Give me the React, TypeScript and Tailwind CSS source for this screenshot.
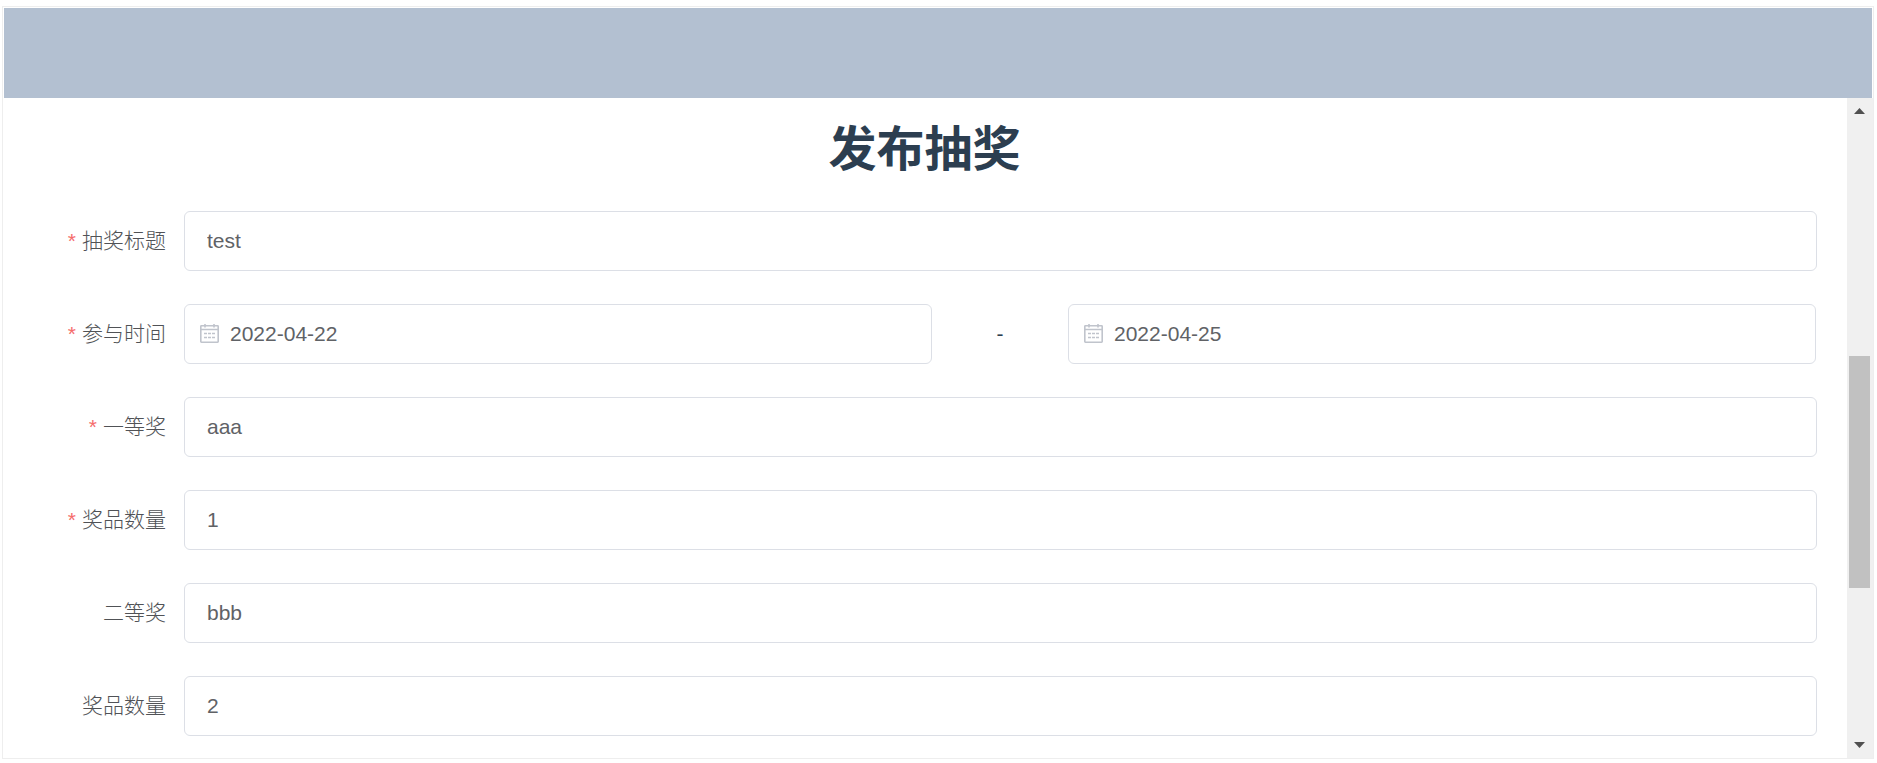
import { useState, type ReactNode } from "react";

const boxClass =
  "h-[60px] w-full rounded-md border border-[#dcdfe6] bg-white text-[21px] text-[#606266] outline-none focus:border-[#409eff]";

function CalendarIcon() {
  return (
    <svg
      className="pointer-events-none absolute left-4 top-5 size-[19px] text-[#c0c4cc]"
      viewBox="0 0 19 19"
      fill="none"
      stroke="currentColor"
      aria-hidden="true"
    >
      <rect x="0.8" y="1.8" width="17.4" height="16.4" rx="0.6" strokeWidth="1.6" />
      <path d="M1 5.5H18" strokeWidth="1.5" />
      <path d="M5 0V3.6M14 0V3.6" strokeWidth="1.6" />
      <path d="M4 9.5H7M8 9.5H11M12 9.5H15M4 13.5H7M8 13.5H11M12 13.5H15" strokeWidth="1.3" />
    </svg>
  );
}

function Row({ id, label, required, children }: { id: string; label: string; required?: boolean; children: ReactNode }) {
  return (
    <div className="flex items-center">
      <label
        htmlFor={id}
        className="w-[180px] shrink-0 pr-[18px] text-right text-[21px] leading-[60px] font-light text-[#505256]"
      >
        {required && <span className="mr-1.5 font-normal text-[#f56c6c]">*</span>}
        {label}
      </label>
      <div className="min-w-0 grow">{children}</div>
    </div>
  );
}

function TextField({ id, label, required, initial }: { id: string; label: string; required?: boolean; initial: string }) {
  const [value, setValue] = useState(initial);
  return (
    <Row id={id} label={label} required={required}>
      <input
        id={id}
        type="text"
        required={required}
        value={value}
        onChange={(e) => setValue(e.target.value)}
        className={`${boxClass} block px-[22px]`}
      />
    </Row>
  );
}

function DateField({ id, name, initial }: { id: string; name: string; initial: string }) {
  const [value, setValue] = useState(initial);
  return (
    <div className="relative">
      <input
        id={id}
        type="text"
        aria-label={name}
        value={value}
        onChange={(e) => setValue(e.target.value)}
        className={`${boxClass} block pr-4 pl-[45px]`}
      />
      <CalendarIcon />
    </div>
  );
}

function Scrollbar() {
  return (
    <div className="flex w-[26px] shrink-0 flex-col bg-[#f0f0f0]">
      <button type="button" aria-label="向上滚动" className="flex h-[26px] items-center justify-center pr-px">
        <svg className="h-1.5 w-[11px]" viewBox="0 0 11 6" fill="#505050" aria-hidden="true">
          <path d="M5.5 0L11 6H0Z" />
        </svg>
      </button>
      <div className="grow-[232]" />
      <div className="mr-[3px] ml-0.5 grow-[232] bg-[#c1c1c1]" />
      <div className="grow-[144]" />
      <button type="button" aria-label="向下滚动" className="flex h-[26px] items-center justify-center pr-px">
        <svg className="h-1.5 w-[11px]" viewBox="0 0 11 6" fill="#505050" aria-hidden="true">
          <path d="M0 0H11L5.5 6Z" />
        </svg>
      </button>
    </div>
  );
}

export default function App() {
  return (
    <div className="bg-white pt-1.5 pr-[3px] pb-1 pl-0.5 font-['Liberation_Sans','Noto_Sans_CJK_SC',sans-serif] text-[#2c3e50]">
      <div className="border border-[#eeeeee]">
        <header className="mx-px mt-px h-[90px] bg-[#b3c0d1]" />
        <div className="flex">
          <main className="min-w-0 grow pr-[30px] pb-[22px] pl-px">
            <h1 className="-mr-7 pt-4 pb-[25px] text-center text-[48px] leading-[72px] font-bold">发布抽奖</h1>
            <form className="flex flex-col gap-[33px]" onSubmit={(e) => e.preventDefault()}>
              <TextField id="title" label="抽奖标题" required initial="test" />
              <Row id="start" label="参与时间" required>
                <div className="grid grid-cols-[11fr_2fr_11fr] items-center pr-px">
                  <DateField id="start" name="参与时间 开始" initial="2022-04-22" />
                  <span className="text-center text-[21px]">-</span>
                  <DateField id="end" name="参与时间 结束" initial="2022-04-25" />
                </div>
              </Row>
              <TextField id="first" label="一等奖" required initial="aaa" />
              <TextField id="first-count" label="奖品数量" required initial="1" />
              <TextField id="second" label="二等奖" initial="bbb" />
              <TextField id="second-count" label="奖品数量" initial="2" />
            </form>
          </main>
          <Scrollbar />
        </div>
      </div>
    </div>
  );
}
